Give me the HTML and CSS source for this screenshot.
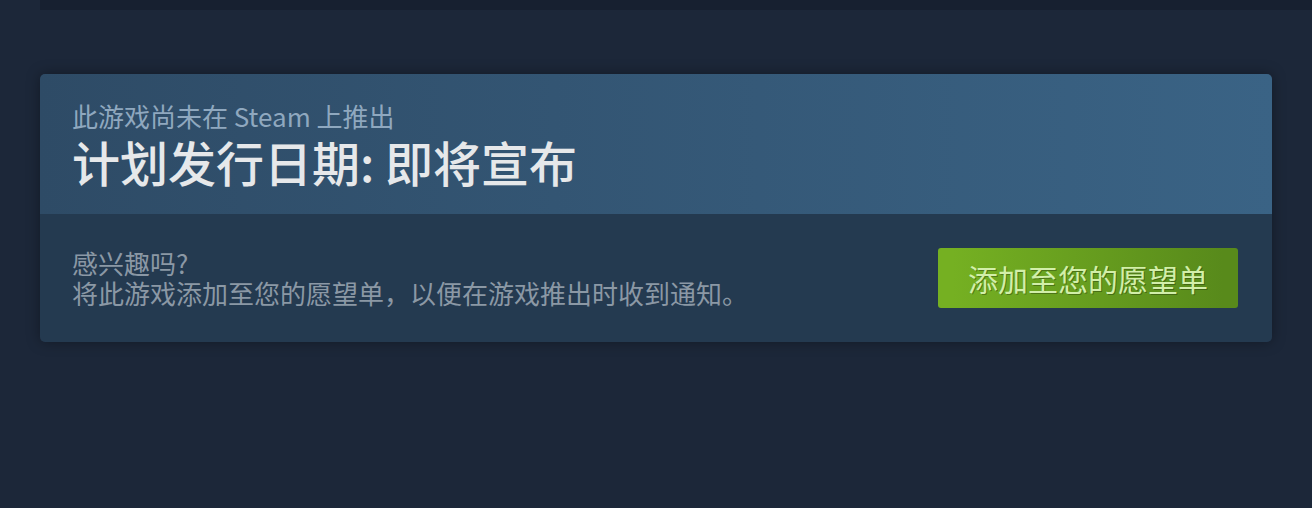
FILE: index.html
```html
<!DOCTYPE html>
<html lang="zh-CN">
<head>
<meta charset="utf-8">
<link rel="stylesheet" href="styles.css">
</head>
<body>
<div class="topstrip"></div>
<div class="card">
  <div class="card-head">
    <div class="sub">此游戏尚未在 Steam 上推出</div>
    <div class="title">计划发行日期: 即将宣布</div>
  </div>
  <div class="card-body">
    <div class="msg">
      <div>感兴趣吗?</div>
      <div>将此游戏添加至您的愿望单，以便在游戏推出时收到通知。</div>
    </div>
    <div class="btn">添加至您的愿望单</div>
  </div>
</div>
</body>
</html>
```
FILE: styles.css
```css
html, body {
  margin: 0;
  padding: 0;
}
body {
  width: 1312px;
  height: 508px;
  overflow: hidden;
  background: #1c2739;
  font-family: "Noto Sans CJK SC", "Noto Sans", sans-serif;
}
.topstrip {
  margin-left: 40px;
  height: 10px;
  background: #172030;
}
.card {
  margin: 64px 40px 0 40px;
  border-radius: 5px;
  overflow: hidden;
  box-shadow: 0 0 14px rgba(0, 0, 0, 0.35);
}
.card-head {
  padding: 27px 32px;
  background: linear-gradient(to right, #2e4b66, #3a6385);
}
.sub {
  font-size: 26px;
  line-height: 30px;
  color: #8fa8bf;
}
.title {
  margin-top: 4px;
  font-size: 48px;
  line-height: 52px;
  font-weight: 500;
  color: #e6e8ea;
}
.card-body {
  height: 128px;
  box-sizing: border-box;
  padding: 0 34px 0 32px;
  background: #243a50;
  display: flex;
  align-items: center;
  justify-content: space-between;
}
.msg {
  font-size: 26px;
  line-height: 30px;
  color: #8b98a5;
}
.btn {
  width: 300px;
  height: 60px;
  border-radius: 3px;
  background: linear-gradient(to right, #75b022 5%, #588a1b 95%);
  color: #d2efa9;
  font-size: 30px;
  line-height: 60px;
  text-align: center;
  text-shadow: 1px 1px 0 rgba(0, 0, 0, 0.3);
}
```
